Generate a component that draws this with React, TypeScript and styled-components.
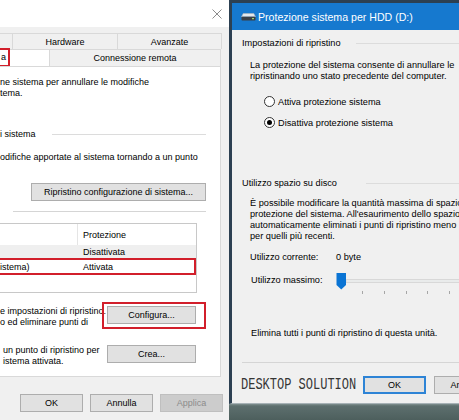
import React from 'react';
import styled, { createGlobalStyle } from 'styled-components';

const GlobalStyle = createGlobalStyle`
    html,
    body {
        margin: 0;
        padding: 0;
    }
    body {
        width: 459px;
        height: 420px;
        overflow: hidden;
        font-family: 'Liberation Sans', Arial, sans-serif;
        font-size: 9px;
        color: #000;
    }
`;

const Screen = styled.div`
    display: flex;
    width: 459px;
    height: 420px;
    overflow: hidden;
    background: #56696a;
`;

/* ---------- left dialog: Proprietà del sistema (cropped) ---------- */

const LeftWindow = styled.div`
    width: 229px;
    flex: none;
    display: flex;
    flex-direction: column;
    background: #f0f0f0;
    overflow: hidden;
`;

const LeftTitle = styled.div`
    height: 27px;
    flex: none;
    background: #fff;
    display: flex;
    align-items: center;
    justify-content: flex-end;
    padding-right: 7px;
`;

const Tabs = styled.div`
    margin-top: 6px;
    width: 221px;
    display: flex;
    flex-direction: column;
`;

const TabRow = styled.div<{ $h: number }>`
    display: flex;
    height: ${(p) => p.$h}px;
`;

const Tab = styled.div<{ $w: number; $active?: boolean }>`
    width: ${(p) => p.$w}px;
    flex: none;
    box-sizing: border-box;
    display: flex;
    align-items: center;
    justify-content: ${(p) => (p.$active ? 'flex-start' : 'center')};
    border: 1px solid #d9d9d9;
    border-bottom: none;
    margin-left: -1px;
    background: ${(p) => (p.$active ? '#fff' : '#f0f0f0')};
    white-space: nowrap;
    &:first-child {
        margin-left: 0;
        border-left: none;
    }
`;

const TabMark = styled.span`
    width: 10px;
    height: 19px;
    margin-top: -2px;
    box-sizing: border-box;
    border: 2px solid #d21f2b;
    border-left: none;
    display: flex;
    align-items: center;
    padding-left: 1px;
`;

const Panel = styled.div`
    width: 221px;
    height: 311px;
    flex: none;
    box-sizing: border-box;
    background: #fff;
    border: 1px solid #d9d9d9;
    border-left: none;
    padding-right: 14px;
    display: flex;
    flex-direction: column;
`;

const Text = styled.div<{ $top?: number; $left?: number }>`
    margin-top: ${(p) => p.$top ?? 0}px;
    padding-left: ${(p) => p.$left ?? 0}px;
    line-height: 11px;
    white-space: nowrap;
`;

const GroupHead = styled.div<{ $top: number; $labelW: number }>`
    display: grid;
    grid-template-columns: ${(p) => p.$labelW}px 1fr;
    align-items: center;
    margin-top: ${(p) => p.$top}px;
    line-height: 11px;
    white-space: nowrap;
    &::after {
        content: '';
        height: 1px;
        background: #dcdcdc;
    }
`;

const Separator = styled.div<{ $top: number; $left: number }>`
    height: 1px;
    flex: none;
    margin-top: ${(p) => p.$top}px;
    margin-left: ${(p) => p.$left}px;
    background: #d5d5d5;
`;

const Button = styled.button<{ $w: number; $kind?: 'default' | 'disabled' }>`
    width: ${(p) => p.$w}px;
    height: 18px;
    flex: none;
    box-sizing: border-box;
    margin: 0;
    padding: 0;
    font: inherit;
    font-size: 9px;
    white-space: nowrap;
    background: ${(p) => (p.$kind === 'disabled' ? '#cccccc' : '#e1e1e1')};
    color: ${(p) => (p.$kind === 'disabled' ? '#8b8b8b' : '#000')};
    border: ${(p) =>
        p.$kind === 'default'
            ? '2px solid #2e84d6'
            : p.$kind === 'disabled'
            ? '1px solid #bfbfbf'
            : '1px solid #adadad'};
`;

const RestoreButton = styled(Button)`
    margin-top: 20px;
    align-self: flex-end;
`;

const ListBox = styled.div`
    margin-top: 11px;
    width: 197px;
    height: 70px;
    flex: none;
    box-sizing: border-box;
    border: 1px solid #c8c8c8;
    border-left: none;
    display: flex;
    flex-direction: column;
`;

const ListRow = styled.div<{ $h: number; $shade?: boolean; $marked?: boolean }>`
    display: grid;
    grid-template-columns: 78px 1fr;
    height: ${(p) => p.$h}px;
    box-sizing: border-box;
    align-items: center;
    white-space: nowrap;
    background: ${(p) => (p.$shade ? '#efefef' : 'transparent')};
    border: ${(p) => (p.$marked ? '2px solid #d21f2b' : 'none')};
    border-left: none;
    & > span:last-child {
        padding-left: 5px;
    }
`;

const ListHeader = styled(ListRow)`
    align-items: stretch;
    & > span {
        display: flex;
        align-items: center;
    }
    & > span:first-child {
        border-right: 1px solid #e5e5e5;
    }
`;

const ActionRow = styled.div<{ $top: number; $textW: number }>`
    display: grid;
    grid-template-columns: ${(p) => p.$textW}px auto;
    align-items: start;
    margin-top: ${(p) => p.$top}px;
`;

const RedFrame = styled.div`
    border: 2px solid #d21f2b;
    padding: 2px 3px 3px;
`;

const LeftFooter = styled.div`
    margin-top: 17px;
    padding-left: 20px;
    display: flex;
    gap: 7px;
`;

/* ---------- right dialog: Protezione sistema per HDD (D:) ---------- */

const RightWindow = styled.div`
    flex: 1;
    min-width: 0;
    display: flex;
    flex-direction: column;
`;

const Frame = styled.div`
    height: 404px;
    flex: none;
    box-sizing: border-box;
    border-left: 3px solid #2c4052;
    border-top: 3px solid #2c4052;
    border-bottom: 1px solid #a7b2b6;
    background: #f0f0f0;
    display: flex;
    flex-direction: column;
    overflow: hidden;
`;

const TitleBar = styled.div`
    height: 27px;
    flex: none;
    background: #1679cf;
    color: #fff;
    display: flex;
    align-items: center;
    gap: 2px;
    padding-left: 9px;
    font-size: 10.6px;
    white-space: nowrap;
`;

const Body = styled.div`
    flex: 1;
    padding-left: 10px;
    display: flex;
    flex-direction: column;
    font-size: 9.2px;
`;

const RadioRow = styled.div<{ $top: number }>`
    display: flex;
    align-items: center;
    gap: 3px;
    height: 13px;
    margin-top: ${(p) => p.$top}px;
    padding-left: 22px;
    white-space: nowrap;
`;

const RadioDot = styled.span<{ $checked?: boolean }>`
    width: 11px;
    height: 11px;
    flex: none;
    box-sizing: border-box;
    border-radius: 50%;
    border: 1px solid #333;
    background: #fff;
    display: flex;
    align-items: center;
    justify-content: center;
    &::after {
        content: '';
        width: 5px;
        height: 5px;
        border-radius: 50%;
        background: #000;
        display: ${(p) => (p.$checked ? 'block' : 'none')};
    }
`;

const ValueRow = styled.div<{ $top: number }>`
    display: grid;
    grid-template-columns: 86px auto;
    margin-top: ${(p) => p.$top}px;
    padding-left: 8px;
    line-height: 11px;
    white-space: nowrap;
`;

const SliderRow = styled.div`
    display: grid;
    grid-template-columns: 85px 1fr;
    height: 26px;
    margin-top: 7px;
    padding-left: 9px;
    white-space: nowrap;
    & > span {
        margin-top: 5px;
        line-height: 11px;
    }
`;

const RightFooter = styled.div`
    display: flex;
    align-items: center;
    margin-top: 13px;
    margin-left: -1px;
    gap: 8px;
`;

const Watermark = styled.div`
    width: 114px;
    flex: none;
    font-family: 'Liberation Mono', 'DejaVu Sans Mono', monospace;
    font-size: 12px;
    line-height: 12px;
    color: #353535;
    white-space: nowrap;
    transform: scaleY(1.4);
    transform-origin: left center;
`;

const Desktop = styled.div`
    flex: 1;
    background: linear-gradient(to bottom, #7f8f8f 0, #5d6f6e 2px, #4d5f5d 100%);
`;

const CloseIcon = () => (
    <svg width="10" height="10" viewBox="0 0 10 10">
        <path d="M0.5 0.5 L9.5 9.5 M9.5 0.5 L0.5 9.5" stroke="#8c8c8c" strokeWidth="1" />
    </svg>
);

const DriveIcon = () => (
    <svg width="15" height="8" viewBox="0 0 15 8">
        <path d="M2.2 0.5 H12.8 L14.5 3.8 H0.5 Z" fill="#e4e8eb" stroke="#aab3ba" strokeWidth="0.6" />
        <rect x="0.5" y="3.8" width="14" height="3.7" rx="0.8" fill="#3a3f45" />
        <rect x="11" y="5" width="2" height="1.2" fill="#9ad46e" />
    </svg>
);

const Slider = () => (
    <svg width="140" height="26" viewBox="0 0 140 26">
        <rect x="10" y="9.5" width="130" height="3" fill="#e9ebeb" stroke="#d8d8d8" strokeWidth="1" />
        {[26, 48, 70, 91, 113, 135].map((x) => (
            <line key={x} x1={x + 0.5} y1="21" x2={x + 0.5} y2="24" stroke="#a6a6a6" strokeWidth="1" />
        ))}
        <path d="M0.5 3 H10 V15 L5.25 19.5 L0.5 15 Z" fill="#0a74d4" />
    </svg>
);

const App = () => {
    return (
        <Screen>
            <GlobalStyle />
            <LeftWindow>
                <LeftTitle>
                    <CloseIcon />
                </LeftTitle>
                <Tabs>
                    <TabRow $h={16}>
                        <Tab $w={13} />
                        <Tab $w={106}>Hardware</Tab>
                        <Tab $w={105}>Avanzate</Tab>
                    </TabRow>
                    <TabRow $h={17}>
                        <Tab $w={50} $active>
                            <TabMark>a</TabMark>
                        </Tab>
                        <Tab $w={172}>Connessione remota</Tab>
                    </TabRow>
                </Tabs>
                <Panel>
                    <Text $top={10}>
                        ne sistema per annullare le modifiche
                        <br />
                        tema.
                    </Text>
                    <GroupHead $top={30} $labelW={52}>
                        i sistema
                    </GroupHead>
                    <Text $top={12}>odifiche apportate al sistema tornando a un punto</Text>
                    <RestoreButton $w={175}>Ripristino configurazione di sistema...</RestoreButton>
                    <Separator $top={10} $left={13} />
                    <ListBox>
                        <ListHeader $h={21}>
                            <span />
                            <span>Protezione</span>
                        </ListHeader>
                        <ListRow $h={13} $shade>
                            <span />
                            <span>Disattivata</span>
                        </ListRow>
                        <ListRow $h={17} $marked>
                            <span>istema)</span>
                            <span>Attivata</span>
                        </ListRow>
                    </ListBox>
                    <ActionRow $top={9} $textW={102}>
                        <Text $top={4}>
                            e impostazioni di ripristino.
                            <br />
                            o ed eliminare punti di
                        </Text>
                        <RedFrame>
                            <Button $w={89}>Configura...</Button>
                        </RedFrame>
                    </ActionRow>
                    <ActionRow $top={16} $textW={107}>
                        <Text $left={3}>
                            un punto di ripristino per
                            <br />
                            istema attivata.
                        </Text>
                        <Button $w={89}>Crea...</Button>
                    </ActionRow>
                </Panel>
                <LeftFooter>
                    <Button $w={63}>OK</Button>
                    <Button $w={63}>Annulla</Button>
                    <Button $w={63} $kind="disabled">
                        Applica
                    </Button>
                </LeftFooter>
            </LeftWindow>

            <RightWindow>
                <Frame>
                    <TitleBar>
                        <DriveIcon />
                        <span>Protezione sistema per HDD (D:)</span>
                    </TitleBar>
                    <Body>
                        <GroupHead $top={8} $labelW={114}>
                            Impostazioni di ripristino
                        </GroupHead>
                        <Text $top={11} $left={8}>
                            La protezione del sistema consente di annullare le
                            <br />
                            ripristinando uno stato precedente del computer.
                        </Text>
                        <RadioRow $top={13}>
                            <RadioDot />
                            <span>Attiva protezione sistema</span>
                        </RadioRow>
                        <RadioRow $top={8}>
                            <RadioDot $checked />
                            <span>Disattiva protezione sistema</span>
                        </RadioRow>
                        <GroupHead $top={49} $labelW={124}>
                            Utilizzo spazio su disco
                        </GroupHead>
                        <Text $top={9} $left={8}>
                            È possibile modificare la quantità massima di spazio
                            <br />
                            protezione del sistema. All'esaurimento dello spazio
                            <br />
                            automaticamente eliminati i punti di ripristino meno
                            <br />
                            per quelli più recenti.
                        </Text>
                        <ValueRow $top={10}>
                            <span>Utilizzo corrente:</span>
                            <span>0 byte</span>
                        </ValueRow>
                        <SliderRow>
                            <span>Utilizzo massimo:</span>
                            <Slider />
                        </SliderRow>
                        <Text $top={32} $left={9}>
                            Elimina tutti i punti di ripristino di questa unità.
                        </Text>
                        <Separator $top={23} $left={0} />
                        <RightFooter>
                            <Watermark>DESKTOP SOLUTION</Watermark>
                            <Button $w={63} $kind="default">
                                OK
                            </Button>
                            <Button $w={63}>Annulla</Button>
                        </RightFooter>
                    </Body>
                </Frame>
                <Desktop />
            </RightWindow>
        </Screen>
    );
};

export default App;
